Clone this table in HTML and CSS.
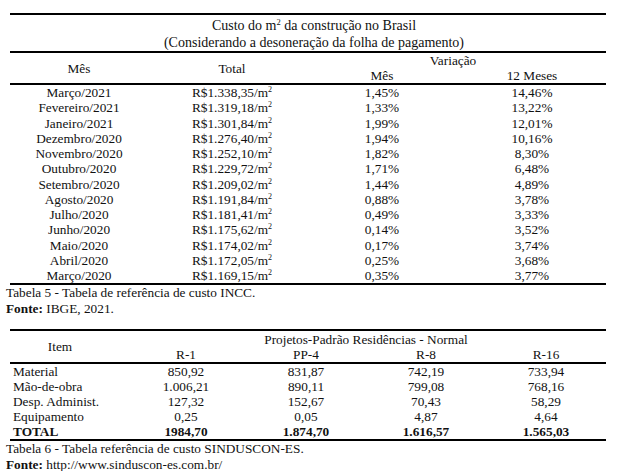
FILE: index.html
```html
<!DOCTYPE html>
<html lang="pt-BR">
<head>
<meta charset="utf-8">
<title>Custo do m² da construção</title>
<link rel="stylesheet" href="styles.css">
</head>
<body>
<div class="page">
  <div class="t1">
    <div class="t1-title">
      <div class="tline">Custo do m<sup>2</sup> da construção no Brasil</div>
      <div class="tline">(Considerando a desoneração da folha de pagamento)</div>
    </div>
    <div class="t1-head">
      <div class="h-mes">Mês</div>
      <div class="h-total">Total</div>
      <div class="h-var">Variação</div>
      <div class="h-sub c3">Mês</div>
      <div class="h-sub c4">12 Meses</div>
    </div>
    <div class="t1-body">
      <div>Março/2021</div><div>R$1.338,35/m<sup>2</sup></div><div>1,45%</div><div class="c4">14,46%</div>
      <div>Fevereiro/2021</div><div>R$1.319,18/m<sup>2</sup></div><div>1,33%</div><div class="c4">13,22%</div>
      <div>Janeiro/2021</div><div>R$1.301,84/m<sup>2</sup></div><div>1,99%</div><div class="c4">12,01%</div>
      <div>Dezembro/2020</div><div>R$1.276,40/m<sup>2</sup></div><div>1,94%</div><div class="c4">10,16%</div>
      <div>Novembro/2020</div><div>R$1.252,10/m<sup>2</sup></div><div>1,82%</div><div class="c4">8,30%</div>
      <div>Outubro/2020</div><div>R$1.229,72/m<sup>2</sup></div><div>1,71%</div><div class="c4">6,48%</div>
      <div>Setembro/2020</div><div>R$1.209,02/m<sup>2</sup></div><div>1,44%</div><div class="c4">4,89%</div>
      <div>Agosto/2020</div><div>R$1.191,84/m<sup>2</sup></div><div>0,88%</div><div class="c4">3,78%</div>
      <div>Julho/2020</div><div>R$1.181,41/m<sup>2</sup></div><div>0,49%</div><div class="c4">3,33%</div>
      <div>Junho/2020</div><div>R$1.175,62/m<sup>2</sup></div><div>0,14%</div><div class="c4">3,52%</div>
      <div>Maio/2020</div><div>R$1.174,02/m<sup>2</sup></div><div>0,17%</div><div class="c4">3,74%</div>
      <div>Abril/2020</div><div>R$1.172,05/m<sup>2</sup></div><div>0,25%</div><div class="c4">3,68%</div>
      <div>Março/2020</div><div>R$1.169,15/m<sup>2</sup></div><div>0,35%</div><div class="c4">3,77%</div>
    </div>
  </div>
  <div class="caption">
    <div>Tabela 5 - Tabela de referência de custo INCC.</div>
    <div><b>Fonte:</b> IBGE, 2021.</div>
  </div>

  <div class="t2">
    <div class="t2-head">
      <div class="h-item">Item</div>
      <div class="h-proj">Projetos-Padrão Residências - Normal</div>
      <div class="h-sub">R-1</div>
      <div class="h-sub">PP-4</div>
      <div class="h-sub">R-8</div>
      <div class="h-sub">R-16</div>
    </div>
    <div class="t2-body">
      <div class="item">Material</div><div>850,92</div><div>831,87</div><div>742,19</div><div>733,94</div>
      <div class="item">Mão-de-obra</div><div>1.006,21</div><div>890,11</div><div>799,08</div><div>768,16</div>
      <div class="item">Desp. Administ.</div><div>127,32</div><div>152,67</div><div>70,43</div><div>58,29</div>
      <div class="item">Equipamento</div><div>0,25</div><div>0,05</div><div>4,87</div><div>4,64</div>
      <div class="item total">TOTAL</div><div class="total">1984,70</div><div class="total">1.874,70</div><div class="total">1.616,57</div><div class="total">1.565,03</div>
    </div>
  </div>
  <div class="caption caption2">
    <div>Tabela 6 - Tabela referência de custo SINDUSCON-ES.</div>
    <div><b>Fonte:</b> http://www.sinduscon-es.com.br/</div>
  </div>
</div>
</body>
</html>
```
FILE: styles.css
```css
html, body {
  margin: 0;
  padding: 0;
  background: #ffffff;
}
body {
  font-family: "Liberation Serif", "Times New Roman", Times, serif;
  font-size: 13.3px;
  color: #111;
}
.page {
  padding: 13px 12px 0 6px;
}
sup {
  font-size: 8px;
  line-height: 0;
  vertical-align: 5px;
}
.t1, .t2 {
  width: 596px;
  margin-left: 4px;
  border-top: 2px solid #000;
  border-bottom: 2px solid #000;
}
.t1-title {
  border-bottom: 2px solid #000;
  padding: 2px 0 0 12px;
  text-align: center;
  font-size: 14px;
}
.t1-title sup {
  font-size: 8.5px;
}
.tline {
  height: 17px;
  line-height: 17px;
}
.t1-head,
.t1-body {
  display: grid;
  grid-template-columns: 138px 168px 132px 158px;
  text-align: center;
}
.t1-head {
  grid-template-rows: 15px 15px;
  line-height: 15px;
  border-bottom: 2px solid #000;
}
.h-mes {
  grid-column: 1;
  grid-row: 1 / 3;
  align-self: center;
}
.h-total {
  grid-column: 2;
  grid-row: 1 / 3;
  align-self: center;
}
.h-var {
  grid-column: 3 / 5;
  grid-row: 1;
  padding-right: 16px;
}
.h-sub.c3 {
  grid-column: 3;
  grid-row: 2;
}
.h-sub.c4 {
  grid-column: 4;
  grid-row: 2;
}
.c4 {
  padding-left: 10px;
}
.t1-body {
  grid-auto-rows: 15.25px;
  line-height: 15.25px;
}
.caption {
  line-height: 16px;
}
.caption div {
  height: 16px;
}
.t2 {
  margin-top: 12px;
}
.t2-head,
.t2-body {
  display: grid;
  grid-template-columns: 116px 120px 120px 120px 120px;
  text-align: center;
}
.t2-head {
  grid-template-rows: 16px 15px;
  line-height: 15px;
  border-bottom: 2px solid #000;
}
.h-item {
  grid-column: 1;
  grid-row: 1 / 3;
  align-self: center;
  padding-right: 16px;
}
.h-proj {
  grid-column: 2 / 6;
  grid-row: 1;
  align-self: end;
}
.t2-body {
  grid-auto-rows: 15px;
  line-height: 15px;
}
.item {
  text-align: left;
  padding-left: 3px;
}
.total {
  font-weight: bold;
}
.caption2 {
  line-height: 15.5px;
}
.caption2 div {
  height: 15.5px;
}
```
